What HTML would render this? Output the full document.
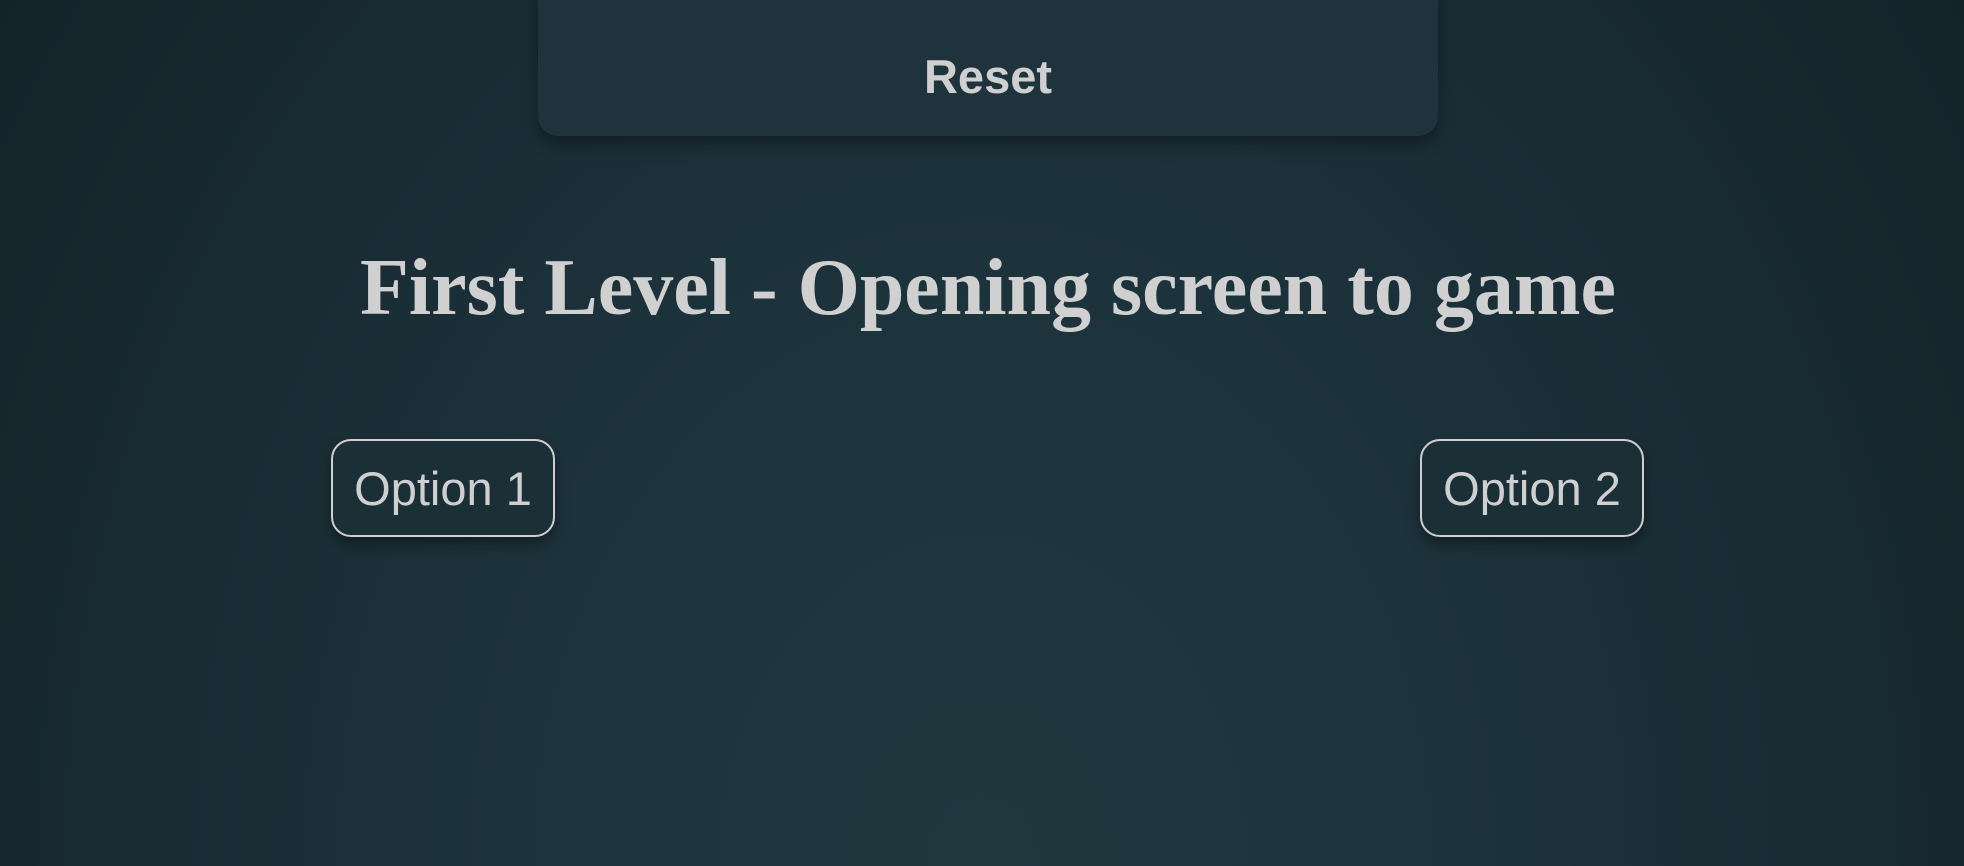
<!DOCTYPE html>
<html><head><meta charset="utf-8"><style>
html,body{margin:0;padding:0;width:1964px;height:866px;overflow:hidden}
body{background:radial-gradient(ellipse 70% 200% at 50% 100%,#21383f 0%,#1d333c 35%,#182a32 65%,#121f25 100%);font-family:"Liberation Sans",sans-serif;position:relative}
.reset{position:absolute;left:538px;top:-20px;width:900px;height:156px;background:#1e333b;border-radius:20px;box-shadow:0 8px 16px rgba(0,0,0,.35);color:#cfcfcf;font-weight:bold;font-size:47px;text-align:center;line-height:1;box-sizing:border-box;padding-top:73px}
h1{position:absolute;left:12px;right:0;top:248px;margin:0;text-align:center;font-family:"Liberation Serif",serif;font-weight:bold;font-size:80px;color:#d0d0d0;line-height:1}
.opt{position:absolute;top:439px;width:224px;height:98px;box-sizing:border-box;border:2px solid #cfcfcf;border-radius:20px;color:#cfcfcf;font-size:47px;display:flex;align-items:center;justify-content:center;box-shadow:0 8px 14px rgba(0,0,0,.35);background:#1b2f37}
</style></head><body>
<div class="reset">Reset</div>
<h1>First Level - Opening screen to game</h1>
<div class="opt" style="left:331px">Option 1</div>
<div class="opt" style="left:1420px">Option 2</div>
</body></html>
